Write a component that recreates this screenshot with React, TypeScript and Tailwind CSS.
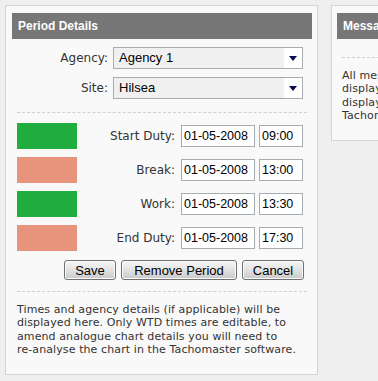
import React from "react";

const labelFont = { fontFamily: '"DejaVu Sans", Verdana, sans-serif' };
const arial = { fontFamily: '"Liberation Sans", Arial, sans-serif' };

function Select({ value }: { value: string }) {
  return (
    <div className="flex h-[22px] w-[190px] border border-[#a5acb2] bg-[#f0f0f0]">
      <div className="flex flex-1 items-center pl-[5px] text-[13px] text-black" style={arial}>
        {value}
      </div>
      <div className="flex w-[18px] items-center justify-center bg-white">
        <svg width="8" height="5" viewBox="0 0 8 5">
          <path d="M0 0 H8 L4 5 Z" fill="#0a0a50" />
        </svg>
      </div>
    </div>
  );
}

function Field({ value, w }: { value: string; w: string }) {
  return (
    <div
      className={`flex h-[22px] items-center border border-[#a5acb2] bg-white pl-[2px] text-[12.5px] text-black ${w}`}
      style={arial}
    >
      {value}
    </div>
  );
}

function PeriodRow({ color, label, date, time }: { color: string; label: string; date: string; time: string }) {
  return (
    <div className="flex h-[26px] items-center">
      <div className={`h-[26px] w-[60px] ${color}`} />
      <div className="flex-1 pr-[6px] text-right text-[12px] text-[#333]" style={labelFont}>
        {label}
      </div>
      <Field value={date} w="w-[74px]" />
      <div className="w-[4px]" />
      <Field value={time} w="w-[44px]" />
    </div>
  );
}

function Btn({ children, w }: { children: React.ReactNode; w: string }) {
  return (
    <button
      className={`h-[20px] ${w} rounded-[3px] border border-[#707070] bg-gradient-to-b from-[#f6f6f6] via-[#e2e2e2] to-[#c9c9c9] text-[13px] leading-none text-black shadow-[inset_0_0_0_1px_#fbfbfb]`}
      style={arial}
    >
      {children}
    </button>
  );
}

export default function App() {
  return (
    <div className="flex h-[381px] w-[378px] items-start gap-[13px] overflow-hidden bg-[#efefef] p-[5px]">
      <div className="h-[370px] w-[313px] shrink-0 border border-[#d4d4d4] bg-[#f9f9f9] pl-[6px] pt-[7px]">
        <div
          className="flex h-[26px] w-[300px] items-center pl-[6px] text-[12px] font-bold text-white bg-[#777777]"
          style={arial}
        >
          Period Details
        </div>
        <div className="w-[286px] pl-[5px] box-content">
          <div className="mt-[8px] flex items-center">
            <div className="w-[96px] pr-[5px] text-right text-[12px] text-[#333]" style={labelFont}>
              Agency:
            </div>
            <Select value="Agency 1" />
          </div>
          <div className="mt-[8px] flex items-center">
            <div className="w-[96px] pr-[5px] text-right text-[12px] text-[#333]" style={labelFont}>
              Site:
            </div>
            <Select value="Hilsea" />
          </div>
          <div className="mt-[13px] w-[290px] border-t border-dashed border-[#cfcfcf]" />
          <div className="mt-[10px] flex flex-col gap-[8px]">
            <PeriodRow color="bg-[#22ad40]" label="Start Duty:" date="01-05-2008" time="09:00" />
            <PeriodRow color="bg-[#e8937b]" label="Break:" date="01-05-2008" time="13:00" />
            <PeriodRow color="bg-[#22ad40]" label="Work:" date="01-05-2008" time="13:30" />
            <PeriodRow color="bg-[#e8937b]" label="End Duty:" date="01-05-2008" time="17:30" />
          </div>
          <div className="mt-[9px] mr-[-1px] flex justify-end gap-[5px]">
            <Btn w="w-[52px]">Save</Btn>
            <Btn w="w-[116px]">Remove Period</Btn>
            <Btn w="w-[62px]">Cancel</Btn>
          </div>
          <div className="mt-[11px] w-[290px] border-t border-dashed border-[#cfcfcf]" />
          <p
            className="mt-[11px] w-[294px] whitespace-nowrap text-[11px] leading-[13.3px] tracking-[0.1px] text-[#333]"
            style={labelFont}
          >
            Times and agency details (if applicable) will be
            <br />
            displayed here. Only WTD times are editable, to
            <br />
            amend analogue chart details you will need to
            <br />
            re-analyse the chart in the Tachomaster software.
          </p>
        </div>
      </div>
      <div className="h-[136px] w-[200px] shrink-0 border border-[#d4d4d4] bg-[#f9f9f9] pl-[5px] pt-[7px]">
        <div
          className="flex h-[26px] w-[190px] items-center pl-[6px] text-[12px] font-bold text-white bg-[#777777]"
          style={arial}
        >
          Messages
        </div>
        <div className="pl-[5px]">
          <div className="mt-[18px] border-t border-dashed border-[#cfcfcf]" />
          <p className="mt-[11px] w-[180px] text-[11px] leading-[13.3px] tracking-[0.1px] text-[#333]" style={labelFont}>
            All messages will be
            <br />
            displayed here. Messages
            <br />
            displayed here come from
            <br />
            Tachomaster software.
          </p>
        </div>
      </div>
    </div>
  );
}
